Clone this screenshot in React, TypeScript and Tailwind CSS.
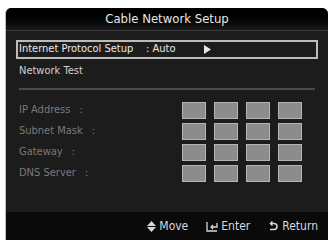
const font = { fontFamily: '"DejaVu Sans Condensed", "Liberation Sans", sans-serif' };

const Boxes = () => (
  <div className="flex gap-[8px]">
    {[0, 1, 2, 3].map((i) => (
      <div key={i} className="h-[17px] w-[24px] border border-[#b5b5b5] bg-[#8c8c8c]" />
    ))}
  </div>
);

const rows = ["IP Address", "Subnet Mask", "Gateway", "DNS Server"];

export default function App() {
  return (
    <div className="h-[240px] w-[331px] bg-white pl-[5px] pr-[3px] pt-[8px] overflow-hidden" style={font}>
      <div className="flex h-[232px] flex-col overflow-hidden rounded-t-[6px] border-l border-[#bdbdbd] bg-[#1c1c1c]">
        <div className="flex h-[23px] items-center justify-center border-b border-[#3c3c3c] bg-gradient-to-b from-[#000] to-[#1a1a1a] text-[13px] text-[#e6e6e6]">
          Cable Network Setup
        </div>
        <div className="flex flex-1 flex-col px-[10px] pt-[9px]">
          <div className="flex h-[19px] items-center border-2 border-[#bcbcbc] pl-[1px] text-[11px] text-[#eaeaea]">
            <span className="w-[127px]">Internet Protocol Setup</span>
            <span className="w-[58px]">: Auto</span>
            <svg width="7" height="9" viewBox="0 0 7 9"><path d="M0 0L7 4.5L0 9Z" fill="#e6e6e6" /></svg>
          </div>
          <div className="mt-[4px] pl-[3px] text-[11px] text-[#d0d0d0]">Network Test</div>
          <div className="mx-[3px] mt-[8px] h-[2px] bg-[#4a4a4a]" />
          <div className="mt-[12px] flex flex-col gap-[4px]">
            {rows.map((r) => (
              <div key={r} className="flex h-[17px] items-center">
                <span className="w-[166px] pl-[3px] text-[11px] text-[#7a7a7a]">
                  {r}
                  <span className="ml-[9px]">:</span>
                </span>
                <Boxes />
              </div>
            ))}
          </div>
        </div>
        <div className="flex h-[28px] items-center justify-end gap-[18px] bg-[#0a0a0a] pr-[10px] text-[12px] text-[#d8d8d8]">
          <span className="flex items-center gap-[3px]">
            <svg width="9" height="11" viewBox="0 0 9 11"><path d="M4.5 0L9 5H0Z M0 6H9L4.5 11Z" fill="#d8d8d8" /></svg>
            Move
          </span>
          <span className="flex items-center gap-[3px]">
            <svg width="12" height="11" viewBox="0 0 12 11" fill="none" stroke="#d8d8d8" strokeWidth="1.3">
              <path d="M1 1V10H11" />
              <path d="M11 2V6H5" />
              <path d="M7 4L5 6L7 8" />
            </svg>
            Enter
          </span>
          <span className="flex items-center gap-[3px]">
            <svg width="11" height="11" viewBox="0 0 11 11" fill="none" stroke="#d8d8d8" strokeWidth="1.5">
              <path d="M3 2.5H6A3 3 0 0 1 6 8.5H2" />
              <path d="M4.5 0.5L2.5 2.5L4.5 4.5" />
            </svg>
            Return
          </span>
        </div>
      </div>
    </div>
  );
}
